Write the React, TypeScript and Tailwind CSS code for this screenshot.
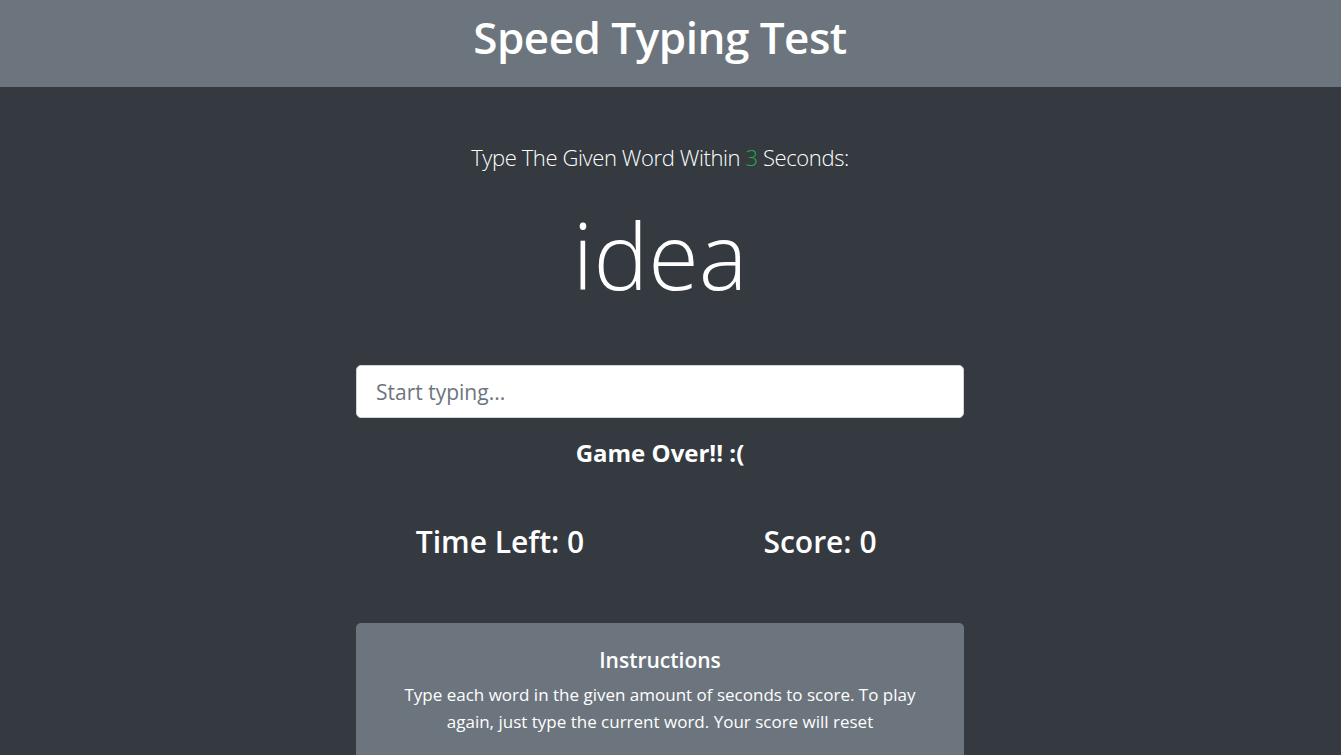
export default function App() {
  return (
    <div className="min-h-[755px] bg-[#343a40] text-white font-['Open_Sans',sans-serif]">
      <header className="h-[87px] bg-[#6c757d] flex items-center justify-center pr-[21px]">
        <h1 className="text-[44px] font-semibold leading-none tracking-[-0.5px] -mt-[14px]">Speed Typing Test</h1>
      </header>

      <div className="pr-[21px]">
        <main className="w-[640px] mx-auto flex flex-col items-center">
          <p className="mt-[55px] text-[22px] font-light leading-[30px] tracking-[-0.4px]">
            Type The Given Word Within <span className="text-[#28a745]">3</span> Seconds:
          </p>

          <h2 className="mt-[23px] text-[92px] font-light leading-[120px]">idea</h2>

          <div className="mt-[50px] w-[608px]">
            <input
              type="text"
              placeholder="Start typing..."
              className="w-full h-[53px] bg-white rounded-[5px] border border-[#ced4da] px-[19px] text-[21px] text-[#495057] placeholder:text-[#6c757d] outline-none"
            />
          </div>

          <h3 className="mt-[20px] text-[24px] font-bold leading-[30px]">Game Over!! :(</h3>

          <div className="mt-[54px] w-full grid grid-cols-2">
            <div className="text-center text-[30px] font-semibold leading-[40px]">Time Left: 0</div>
            <div className="text-center text-[30px] font-semibold leading-[40px]">Score: 0</div>
          </div>

          <div className="mt-[61px] w-[608px] bg-[#6c757d] rounded-[5px] pt-[22px] pb-[30px] px-[40px] text-center">
            <h5 className="text-[21px] font-semibold leading-[30px]">Instructions</h5>
            <p className="mt-[6px] text-[17px] leading-[27px]">
              Type each word in the given amount of seconds to score. To play again, just type the current word. Your score will reset
            </p>
          </div>
        </main>
      </div>
    </div>
  );
}
